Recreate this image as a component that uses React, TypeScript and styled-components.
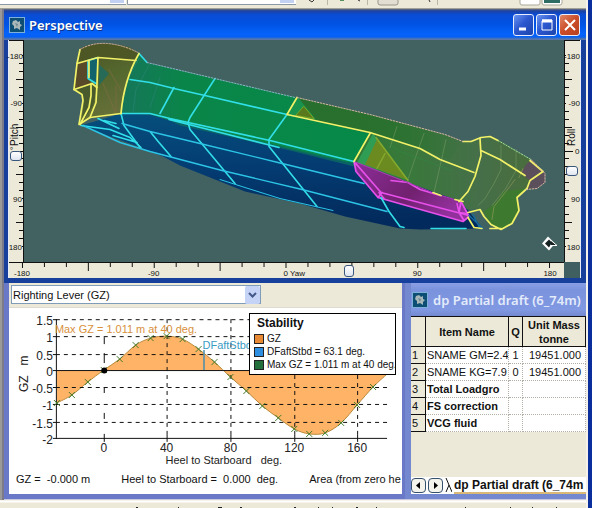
import React from "react";
import styled, { createGlobalStyle } from "styled-components";

const Global = createGlobalStyle`
  * { box-sizing: border-box; }
  body { margin: 0; background: #ece9d8; color: #111; font-family: "Liberation Sans", Arial, sans-serif; font-size: 11px; }
  button, select, input { font: inherit; margin: 0; padding: 0; }
`;

const Shell = styled.div`
  display: flex;
  min-height: 100vh;
  overflow: hidden;
`;
const Workspace = styled.main`
  flex: 1;
  min-width: 0;
  display: flex;
  flex-direction: column;
`;
const OuterEdge = styled.div`
  width: 6px;
  background: #0a2f9c;
  border-left: 2px solid #f4f1ea;
`;
const Strip = styled.div<{ $h: number }>`
  height: ${(p) => p.$h}px;
  background: #ece9d8;
  overflow: hidden;
  svg { display: block; }
`;
const Desk = styled.div`
  flex: 1;
  display: flex;
  flex-direction: column;
  padding-left: 4px;
  background: linear-gradient(90deg, #9c9a98 0 2px, #7a7a88 2px 4px, transparent 4px);
`;
const Win = styled.section`
  flex: 1;
  display: flex;
  flex-direction: column;
  border: solid #173f9c;
  border-width: 0 5px 5px 4px;
  background: #ece9d8;
`;
const TitleBar = styled.header<{ $dim?: boolean }>`
  display: flex;
  align-items: center;
  gap: ${(p) => (p.$dim ? 5 : 4)}px;
  height: ${(p) => (p.$dim ? 33 : 31)}px;
  padding: ${(p) => (p.$dim ? "0 0 0 1px" : "0 6px 0 5px")};
  margin: ${(p) => (p.$dim ? "0" : "0 -5px 0 -4px")};
  color: ${(p) => (p.$dim ? "#e4ebfb" : "#fff")};
  background: ${(p) =>
    p.$dim
      ? "linear-gradient(#8a9fe4, #7b92dd 20%, #8099e2 80%, #7488d0)"
      : "linear-gradient(#676f82 0, #1d42a0 6%, #0a4cd4 18%, #0053e4 50%, #0563fb 80%, #0560f4 90%, #5876a8 97%)"};
  overflow: hidden;
`;
const TitleText = styled.h1<{ $dim?: boolean }>`
  flex: 1;
  margin: 0;
  font: 600 13px/18px "Noto Sans", sans-serif;
  white-space: nowrap;
  overflow: hidden;
  text-shadow: ${(p) => (p.$dim ? "none" : "1px 1px 0 #10328a")};
`;
const Caption = styled.button<{ $close?: boolean }>`
  width: 21px;
  height: 22px;
  border: 1px solid #e8eefc;
  border-radius: 3px;
  background: ${(p) =>
    p.$close
      ? "linear-gradient(135deg, #e08868, #cc4c28 50%, #b84020)"
      : "linear-gradient(135deg, #6a94f0, #2c58d0 45%, #1c44ac)"};
  svg { display: block; margin: auto; }
`;
const Buttons = styled.div`
  display: flex;
  gap: 2px;
`;
const ViewGrid = styled.div`
  flex: 1;
  display: grid;
  grid-template-columns: 15px minmax(0, 1fr) 16px;
  grid-template-rows: minmax(222px, 1fr) 16px;
  border: solid #e8ebf8;
  border-width: 0 1px 0 1px;
`;
const RulerBox = styled.div<{ $side: "left" | "right" | "bottom" }>`
  position: relative;
  background: #ece9d8;
  grid-column: ${(p) => (p.$side === "bottom" ? "1 / 3" : "auto")};
  border: 0 solid #111;
  border-top-width: 1px;
  border-right-width: ${(p) => (p.$side === "left" ? 1 : 0)}px;
  border-left-width: ${(p) => (p.$side === "right" ? 1 : 0)}px;
  svg { position: absolute; inset: 0; width: 100%; height: 100%; overflow: visible; }
  text { font-size: 8px; fill: #111; }
`;
const Viewport = styled.div`
  background: #426262;
  min-width: 0;
  svg { display: block; width: 100%; height: 100%; }
`;
const Corner = styled.div`
  background: #3f5f60;
`;
const Slider = styled.input<{ $vertical?: boolean }>`
  appearance: none;
  position: absolute;
  background: transparent;
  ${(p) =>
    p.$vertical
      ? "writing-mode: vertical-lr; top: 9px; bottom: 9px; left: 0; width: 14px;"
      : "left: 9px; right: 9px; top: 1px; height: 14px;"}
  &::-webkit-slider-thumb {
    appearance: none;
    width: ${(p) => (p.$vertical ? 12 : 10)}px;
    height: ${(p) => (p.$vertical ? 10 : 12)}px;
    border: 1px solid #39577c;
    border-radius: 3px;
    background: linear-gradient(#fff, #dfe5f0);
  }
`;
const AxisName = styled.text`
  && { font-size: 10px; }
`;
const Lower = styled.div`
  display: flex;
  height: 217px;
  border-bottom: 1px solid #c8c8dc;
`;
const GraphWin = styled.section`
  flex: 0 1 401px;
  min-width: 0;
  display: flex;
  flex-direction: column;
  background: #fff;
  border: solid #6a78c8;
  border-width: 0 3px 5px 5px;
`;
const SheetWin = styled.section`
  flex: 1;
  min-width: 0;
  display: flex;
  flex-direction: column;
  background: #ece9d8;
  border: solid #7488d0;
  border-width: 0 0 5px 6px;
`;
const PickerRow = styled.div`
  display: flex;
  flex: none;
  height: 25px;
  padding: 2px 0 3px 2px;
  background: #ece9d8;
  border-bottom: 1px solid #dedbd0;
`;
const Picker = styled.label`
  position: relative;
  flex: 0 1 250px;
  display: flex;
  svg { position: absolute; right: 1px; top: 1px; pointer-events: none; }
`;
const Select = styled.select`
  appearance: none;
  width: 100%;
  padding-left: 1px;
  border: 1px solid #7f9db9;
  border-radius: 0;
  background: #fff;
  color: #111;
`;
const ChartBox = styled.div`
  position: relative;
  flex: 1;
  min-height: 0;
  > svg { display: block; width: 100%; height: 100%; }
  text { font-size: 12px; fill: #222; white-space: pre; }
`;
const Legend = styled.aside`
  position: absolute;
  right: 6px;
  top: 5px;
  width: 147px;
  padding: 1px 0 3px 4px;
  background: #fff;
  border: 1px solid #000;
  white-space: nowrap;
`;
const LegendTitle = styled.h2`
  margin: 0 0 0 3px;
  font-size: 12px;
  line-height: 17px;
`;
const LegendItem = styled.div<{ $c: string }>`
  display: flex;
  align-items: center;
  gap: 3px;
  line-height: 13px;
  font-size: 10px;
  &::before {
    content: "";
    flex: none;
    width: 8px;
    height: 8px;
    border: 1px solid #222;
    background: ${(p) => p.$c};
  }
`;
const Readout = styled.footer`
  display: flex;
  flex: none;
  gap: 31px;
  padding: 0 0 8px 7px;
  line-height: 14px;
  white-space: pre;
  overflow: hidden;
`;
const Table = styled.table`
  width: 100%;
  table-layout: fixed;
  border-collapse: separate;
  border-spacing: 0;
  background: #fff;
  th, td { padding: 0 1px; overflow: hidden; white-space: nowrap; height: 17px; }
`;
const Head = styled.th<{ $w?: number }>`
  width: ${(p) => (p.$w ? p.$w + "px" : "auto")};
  && { height: 31px; white-space: normal; padding: 0; }
  background: #ece9d8;
  border: solid #111;
  border-width: 1px 1px 1px 0;
  line-height: 14px;
`;
const RowHead = styled.th`
  background: #ece9d8;
  border: solid #111;
  border-width: 0 1px 1px 0;
  font-weight: 400;
  text-align: left;
  font-size: 11px;
`;
const Cell = styled.td<{ $bold?: boolean; $align?: string }>`
  font-size: 11px;
  font-weight: ${(p) => (p.$bold ? 700 : 400)};
  text-align: ${(p) => p.$align ?? "left"};
  border: dotted #b4b0a8;
  border-width: 0 1px 1px 0;
`;
const MassCell = styled(Cell)`
  && { padding-right: 4px; }
`;
const TabBar = styled.nav`
  display: flex;
  align-items: center;
  gap: 2px;
  height: 17px;
  margin-top: auto;
  background: #fff;
  overflow: hidden;
`;
const Nudge = styled.button`
  flex: none;
  width: 15px;
  height: 15px;
  border: 1px solid #33506e;
  border-radius: 4px;
  background: #f4f3ec;
  svg { display: block; margin: auto; }
`;
const SheetTab = styled.button`
  flex: 1;
  min-width: 0;
  height: 17px;
  overflow: hidden;
  border: 0;
  border-bottom: 2px solid #d9b878;
  background: #fff;
  color: #111;
  font-weight: 700;
  font-size: 12px;
  line-height: 14px;
  text-align: left;
  white-space: nowrap;
`;

const AppIcon = () => (
  <svg width="16" height="16" viewBox="0 0 16 16" aria-hidden="true">
    <rect x=".5" y=".5" width="15" height="15" fill="#0d4f74" stroke="#7fb0d8" />
    <path d="M4 4l3-1 2 2 2-1 0 3 2 1-2 2 0 3-3-2-3 1 0-3-2-2z" fill="#a8b8b8" />
    <path d="M6 6l3 1-1 3z" fill="#6f8890" />
  </svg>
);

const steps = Array.from({ length: 25 }, (_, i) => i);

function VerticalRuler({ side, name, value }: { side: "left" | "right"; name: string; value: number }) {
  const left = side === "left";
  return (
    <RulerBox $side={side}>
      <svg viewBox={left ? "1 0 14 221" : "0 0 15 221"}>
        {steps.map((i) => {
          const y = Math.round(14 + i * 7.96) + 0.5;
          const len = i === 12 ? (left ? 3 : 8) : i % 6 === 0 ? 1 : i % 3 === 0 ? 7 : 4;
          return <path key={i} d={left ? `M15 ${y}h-${len}` : `M0 ${y}h${len}`} stroke="#111" />;
        })}
        {[-180, -90, 90, 180].map((v) => (
          <text key={v} x={left && v !== -180 ? 14 : 15} y={110 + (v / 180) * 95.5 + 3} textAnchor="end">
            {v}
          </text>
        ))}
        <AxisName transform="translate(10 105) rotate(-90)">{name}</AxisName>
        {left ? <text transform="translate(8 109) rotate(-90)">°</text> : <text x="10" y="113">0</text>}
      </svg>
      <Slider $vertical type="range" min={-180} max={180} defaultValue={value} aria-label={name} />
    </RulerBox>
  );
}

function YawRuler() {
  return (
    <RulerBox $side="bottom">
      <svg viewBox="9 263 556 15">
        {steps.map((i) => {
          const x = Math.round(22 + i * 22) + 0.5;
          return <path key={i} d={`M${x} 263v${i % 6 === 3 ? 8 : i % 6 === 0 ? 5 : 4}`} stroke="#111" />;
        })}
        <text x="22" y="276" textAnchor="middle">-180</text>
        <text x="154" y="276" textAnchor="middle">-90</text>
        <text x="284" y="276">0 Yaw</text>
        <text x="418" y="276" textAnchor="middle">90</text>
        <text x="551" y="276" textAnchor="middle">180</text>
      </svg>
      <Slider type="range" min={-180} max={180} defaultValue={43} aria-label="Yaw" />
    </RulerBox>
  );
}

const Hull = () => (
  <svg viewBox="24 41 540 221" role="img" aria-label="Hull perspective" fill="none" strokeLinejoin="round" strokeLinecap="round">
    <defs>
      <linearGradient id="blue" x1="0" y1="0" x2="0.12" y2="1">
        <stop offset="0" stopColor="#064f7c" />
        <stop offset=".5" stopColor="#043c72" />
        <stop offset="1" stopColor="#032a5c" />
      </linearGradient>
      <linearGradient id="green" x1="0" y1="0" x2="1" y2="0">
        <stop offset="0" stopColor="#16755a" />
        <stop offset=".25" stopColor="#0a8549" />
        <stop offset="1" stopColor="#068a48" />
      </linearGradient>
      <linearGradient id="fore" x1="0" y1="0" x2="1" y2="0">
        <stop offset="0" stopColor="#22752f" />
        <stop offset=".45" stopColor="#38793a" />
        <stop offset=".75" stopColor="#466f49" />
        <stop offset="1" stopColor="#4a6c38" />
      </linearGradient>
      <linearGradient id="deck" x1="0" y1="0" x2="1" y2="0">
        <stop offset="0" stopColor="#286f2e" />
        <stop offset=".6" stopColor="#286f2e" stopOpacity=".8" />
        <stop offset="1" stopColor="#286f2e" stopOpacity="0" />
      </linearGradient>
      <linearGradient id="pink" x1="0" y1="0" x2="1" y2=".5">
        <stop offset="0" stopColor="#8c2d98" />
        <stop offset=".6" stopColor="#71216f" />
        <stop offset="1" stopColor="#92309c" />
      </linearGradient>
      <linearGradient id="stern" x1="0" y1="0" x2=".3" y2="1">
        <stop offset="0" stopColor="#4c4e23" />
        <stop offset=".5" stopColor="#54682e" />
        <stop offset="1" stopColor="#68703a" />
      </linearGradient>
    </defs>

    <path d="M81 126L121 114L150 114L170 118L270 139L355 160L400 180L462 202L472 216L483 229L420 230L400 229L345 217L300 204L245 192L220 182L180 166L163 157L135 146L110 137Z" fill="url(#blue)" />
    <path d="M139 54L147 63L297 98L287 115L370 134L354 164L320 157L270 145L170 121L150 115L121 114L126 80Z" fill="url(#green)" />
    <path d="M170 121L270 144L354 164L354 167L290 151L180 126Z" fill="#0c6c60" opacity=".8" />
    <path d="M297 98L370 115L445 135L463 142L472 142L490 137L500 141L531 160L545 175L544 183L537 189L526 189L517 197L519 212L512 224L501 230L490 226L480 210L467 210L461 202L400 180L355 162L370 134L287 115Z" fill="url(#fore)" />
    <path d="M297 98L370 115L445 135L463 142L450 160L420 149L370 133L290 115Z" fill="url(#deck)" />
    <path d="M526 189L517 197L519 212L512 224L501 230L490 224L484 212Q499 203 503 192Z" fill="#3b7d2b" opacity=".8" />
    <path d="M526 165L532 160L545 174L545 183L537 189L527 189L530 181L521 174Z" fill="#5c4f5c" />
    <path d="M373 134L409 181L357 163Z" fill="#309d55" />
    <path d="M377 140L409 181L365 165Z" fill="#6b8b21" />
    <path d="M385 154L377 169M376 138L408 181" stroke="#85a92c" strokeWidth="1.5" />
    <path d="M298 98L316 120L288 115Z" fill="#17934e" />
    <path d="M304 107L314 119L296 116Z" fill="#59791c" stroke="#78a423" />

    <path d="M80 49Q92 43 107 44T130 48L139 54L133 66L126 83L121 114L90 118L80 126L83 101L82 95L74 90L77 64Z" fill="url(#stern)" />
    <path d="M80 50Q92 44 107 44T138 54L136 61L98 58L77 64Z" fill="#4c5725" />
    <path d="M77 64L88 61V80L92 84L74 90Z" fill="#584929" />
    <path d="M88 60L98 58L97 84L88 80Z" fill="#12636c" />
    <path d="M99 65L109 74L99 86Z" fill="#286a58" />
    <path d="M74 90L92 84L97 88L93 106L81 125L84 105L82 95Z" fill="#495b2c" />
    <path d="M109 70L121 91M103 84L116 114M116 86V112" stroke="#806b43" strokeWidth=".7" />

    <g stroke="#7c9d68" strokeWidth=".7" opacity=".75">
      <path d="M424 134L414 162L408 180M446 140L440 167L434 193M390 148L397 127" />
      <path d="M501 146L501 170L494 184L485 199L478 206M516 150V171L505 190L492 206" />
      <path d="M515 180Q507 191 494 207L492 220M519 178L523 169" stroke="#a8a463" />
      <path d="M389 144L400 152L452 171" stroke="#318a44" />
    </g>
    <path d="M139 59L130 75M150 64L136 90L133 112M160 78L150 108" stroke="#25826d" strokeWidth=".8" />

    <path d="M354 162L400 180L435 194L461 202L469 217L463 222L378 198L356 172Z" fill="url(#pink)" />
    <path d="M354 162L356 172L378 198L463 222L469 217L461 202M354 162L381 193L469 216M378 198L382 193M461 202L459 213L464 221M391 181L408 183L420 190L440 196" stroke="#e850ec" strokeWidth="1.7" />
    <path d="M354 162L400 180L435 194L461 202" stroke="#b03cb8" strokeWidth="1" />
    <path d="M457 204L459 213L467 214M379 193L384 199" stroke="#e850ec" strokeWidth="1.5" />
    <path d="M469 216L483 229M473 215L480 229" stroke="#176a9b" strokeWidth="1.5" />

    <g stroke="#32dfe8" strokeWidth="1.6">
      <path d="M139 54L147 63" />
      <path d="M130 80L150 83L174 89L205 96L287 115" />
      <path d="M174 88L160 114M215 79L190 118L188 123L190 130L235 184M287 115L269 140V147L317 207" />
      <path d="M121 114L150 114L170 119L270 141L354 162M169 120L279 148" />
      <path d="M121 114L124 126L140 148M150 132L159 143L171 157" />
      <path d="M381 198L389 212L400 227L404 228M431 229H466" />
      <path d="M81 126L110 130L130 138L141 148M98 119L119 129M104 121L116 124M113 136L137 143" />
      <path d="M88 79V61L98 58M88 79L96 84" />
    </g>
    <g stroke="#2cc5e6" strokeWidth="1.4">
      <path d="M122 124L150 132L200 144L278 163L364 184" />
      <path d="M83 126L120 143L150 152L222 171L302 190L387 212" />
      <path d="M220 180L245 188L280 199L333 211" strokeWidth="1" />
    </g>
    <g stroke="#f2f268" strokeWidth="1.7">
      <path d="M80 50L77 64L74 90L82 95L83 101L79 125L90 118L121 114" />
      <path d="M139 54Q124 80 121 114M77 64L98 58L136 61M98 58L97 84L96 103L90 118" />
      <path d="M74 90L92 84L97 88M91 84V96L89 108L80 125M89 61V78" />
      <path d="M297 98L287 115L370 133L395 141L420 149L440 160L474 173M370 134L354 162" />
      <path d="M480 139L481 156L475 177L468 192L459 202M481 151L500 160L525 176" />
      <path d="M463 142L471 142L481 138L490 137L498 141M530 161L543 172L530 181L527 189" />
      <path d="M527 189L517 198L519 211L512 224L501 230L491 225L484 217L480 210L468 213M468 218L474 228L482 229M490 229H501" />
      <path d="M433 193L441 196M455 200L463 202" />
    </g>
    <path d="M80 50Q92 43 107 44T138 53M297 98L370 115L445 135L463 142M531 160L545 174L545 183L537 189L526 190" stroke="#d8b5a6" strokeWidth="1" strokeDasharray="1.5 1.5" />
    <path d="M147 63L295 98" stroke="#93afc9" strokeDasharray="1.5 1.5" />
    <path d="M498 141L531 160" stroke="#9cdf9a" strokeDasharray="1.5 1.5" />
    <path d="M548 237L555 244L549 251L542 244Z" fill="#fff" />
    <path d="M549 240L552 243L549 248L545 244Z" fill="#152020" />
    <path d="M551 241L557 246H551" fill="#152020" stroke="#fff" />
  </svg>
);

const gz: [number, number][] = [
  [57, 403], [72, 395], [88, 382], [104, 370], [120, 359], [136, 345], [151, 338], [167, 336], [183, 339], [199, 349],
  [215, 362], [231, 377], [247, 391], [263, 406], [279, 418], [295, 429], [310, 434], [326, 433], [342, 423], [358, 405],
  [374, 387], [388, 374],
];
const curve = gz
  .slice(1)
  .map(([x, y], i) => {
    const a = gz[Math.max(0, i - 1)];
    const b = gz[i];
    const d = gz[Math.min(gz.length - 1, i + 2)];
    return `C${b[0] + (x - a[0]) / 6} ${b[1] + (y - a[1]) / 6} ${x - (d[0] - b[0]) / 6} ${y - (d[1] - b[1]) / 6} ${x} ${y}`;
  })
  .join("");
const yLabels: [string, number][] = [
  ["1.5", 319], ["1", 336], ["0.5", 354], ["0", 370], ["-0.5", 387], ["-1", 404], ["-1.5", 422], ["-2", 438],
];

const Tint = styled.text<{ $c: string }>`
  &&& { fill: ${(p) => p.$c}; font-size: 11px; }
`;

const Chart = () => (
  <svg viewBox="9 308 394 164" role="img" aria-label="Righting lever curve">
    <path d={`M57 370.5V403${curve}V370.5Z`} fill="#ffb366" />
    <path d={`M57 403${curve}`} fill="none" stroke="#b8893a" />
    {yLabels.map(([t, y]) => (
      <g key={t}>
        <path
          d={`M56 ${y + 0.5}H388`}
          stroke="#111"
          strokeDasharray={t === "0" || t === "-2" ? undefined : "4 4"}
        />
        <path d={`M53 ${y + 0.5}h4`} stroke="#111" />
        <text x="53" y={y + 6} textAnchor="end">{t}</text>
      </g>
    ))}
    <path d="M56.5 319V438" stroke="#111" />
    <path d="M167.5 319V438M231.5 319V438M295.5 319V438M358.5 319V438" stroke="#111" strokeDasharray="4 4" />
    <path d="M104.5 337v7M104.5 353v10M104.5 387v6M104.5 413v6M104.5 434v8M167.5 435v7M231.5 435v7M295.5 435v7M358.5 435v7" stroke="#111" />
    {gz.slice(0, -1).map(([x, y]) => (
      <path key={x} d={`M${x - 3} ${y - 3}l6 6m0-6l-6 6`} stroke="#3f7a28" />
    ))}
    <path d="M204.5 350V370" stroke="#4b8eb0" strokeWidth="1.5" />
    <circle cx="104.5" cy="370.5" r="3" fill="#000" />
    <text x="104" y="452" textAnchor="middle">0</text>
    <text x="167" y="452" textAnchor="middle">40</text>
    <text x="231" y="452" textAnchor="middle">80</text>
    <text x="295" y="452" textAnchor="middle">120</text>
    <text x="358" y="452" textAnchor="middle">160</text>
    <Tint x="55" y="333" $c="#d8903c">Max GZ = 1.011 m at 40 deg.</Tint>
    <Tint x="203" y="349" $c="#3b9cc4">DFaftStbd</Tint>
    <Tint x="166" y="464" $c="#222">{"Heel to Starboard   deg."}</Tint>
    <text transform="translate(28 392) rotate(-90)">{"GZ   m"}</text>
  </svg>
);

const rows: [string, string, string, boolean][] = [
  ["SNAME GM=2.4", "1", "19451.000", false],
  ["SNAME KG=7.9", "0", "19451.000", false],
  ["Total Loadgro", "", "", true],
  ["FS correction", "", "", true],
  ["VCG fluid", "", "", true],
];

export default function App() {
  return (
    <Shell>
      <Global />
      <Workspace>
        <Strip $h={9}>
          <svg width="586" height="9" viewBox="0 0 586 9" aria-hidden="true">
            <path d="M0 0H126V4H0ZM128 0H296V4H128Z" fill="#fff" />
            <path d="M0 4.500H126M127.500 0V4.500H296" stroke="#8c98a4" fill="none" />
            <path d="M110 0h14v3h-14zM280 0h14v3h-14z" fill="#c2d0f2" />
            <path d="M309 0l3 2 2-2M358 0l2 1M429 0l1 2" stroke="#333" fill="none" />
            <path d="M340 0h4v1h-4z" fill="#55905c" />
            <path d="M327.500 0V5M367.500 0V5M437.500 0V5" stroke="#bbb7a6" />
            <rect x="378" y="-8" width="20" height="13" rx="2" fill="#e2dfd2" stroke="#98948a" />
            <rect x="520" y="-8" width="20" height="13" rx="2" fill="#fff" stroke="#aaa69a" />
            <rect x="542" y="-8" width="20" height="13" rx="2" fill="#fff" stroke="#aaa69a" />
            <path d="M544 0h16v3h-16z" fill="#2f6d64" />
            <path d="M0 8.500H586" stroke="#a3a197" />
          </svg>
        </Strip>
        <Desk>
          <Win>
            <TitleBar>
              <AppIcon />
              <TitleText>Perspective</TitleText>
              <Buttons>
                <Caption aria-label="Minimize">
                  <svg width="14" height="14"><path d="M2 11h7" stroke="#fff" strokeWidth="3" /></svg>
                </Caption>
                <Caption aria-label="Maximize">
                  <svg width="14" height="14"><path d="M2 3v9h10V2H2" fill="none" stroke="#fff" /><path d="M2 3h10" stroke="#fff" strokeWidth="3" /></svg>
                </Caption>
                <Caption $close aria-label="Close">
                  <svg width="14" height="14"><path d="M2 2l10 10M12 2L2 12" stroke="#fff" strokeWidth="2" /></svg>
                </Caption>
              </Buttons>
            </TitleBar>
            <ViewGrid>
              <VerticalRuler side="left" name="Pitch" value={9} />
              <Viewport><Hull /></Viewport>
              <VerticalRuler side="right" name="Roll" value={37} />
              <YawRuler />
              <Corner />
            </ViewGrid>
          </Win>
          <Lower>
            <GraphWin>
              <PickerRow>
                <Picker>
                  <Select aria-label="Graph type">
                    <option>Righting Lever (GZ)</option>
                  </Select>
                  <svg width="15" height="18" aria-hidden="true">
                    <rect width="15" height="18" rx="2" fill="#c5d3f7" />
                    <path d="M4 7l3.500 3.500L11 7" fill="none" stroke="#42598a" strokeWidth="2" />
                  </svg>
                </Picker>
              </PickerRow>
              <ChartBox>
                <Chart />
                <Legend>
                  <LegendTitle>Stability</LegendTitle>
                  <LegendItem $c="#e88a34">GZ</LegendItem>
                  <LegendItem $c="#2e8ee0">DFaftStbd = 63.1 deg.</LegendItem>
                  <LegendItem $c="#24703c">Max GZ = 1.011 m at 40 deg.</LegendItem>
                </Legend>
              </ChartBox>
              <Readout>
                <span>{"GZ =  -0.000 m"}</span>
                <span>{"Heel to Starboard =  0.000  deg."}</span>
                <span>Area (from zero he</span>
              </Readout>
            </GraphWin>
            <SheetWin>
              <TitleBar $dim>
                <AppIcon />
                <TitleText $dim>dp Partial draft (6_74m)</TitleText>
              </TitleBar>
              <Table>
                <thead>
                  <tr>
                    <Head $w={15} aria-label="Row" />
                    <Head $w={83}>Item Name</Head>
                    <Head $w={14}>Q</Head>
                    <Head>Unit Mass tonne</Head>
                  </tr>
                </thead>
                <tbody>
                  {rows.map(([name, q, mass, bold], i) => (
                    <tr key={name}>
                      <RowHead scope="row">{i + 1}</RowHead>
                      <Cell $bold={bold}>{name}</Cell>
                      <Cell $align="center">{q}</Cell>
                      <MassCell $align="right">{mass}</MassCell>
                    </tr>
                  ))}
                </tbody>
              </Table>
              <TabBar>
                <Nudge aria-label="Previous sheet"><svg width="7" height="7"><path d="M5 0v7L1 3.500z" /></svg></Nudge>
                <Nudge aria-label="Next sheet"><svg width="7" height="7"><path d="M2 0v7l4-3.500z" /></svg></Nudge>
                <svg width="7" height="15"><path d="M1 0l6 14M4 7L1 14" stroke="#111" fill="none" /></svg>
                <SheetTab>dp Partial draft (6_74m</SheetTab>
              </TabBar>
            </SheetWin>
          </Lower>
        </Desk>
        <Strip $h={8}>
          <svg width="586" height="8" viewBox="0 0 586 8" aria-hidden="true">
            <path d="M0 1.500H586" stroke="#fff" strokeWidth="2" />
            <path d="M136 7.500h2M178 7.500h1M218 7.500h4M240 7.500h2M294 7.500h2M318 7.500h1M332 7.500h1M356 7.500h2M376 7.500h1M465 7.500h1M510 7.500h1M532 7.500h1M556 7.500h1" stroke="#222" />
          </svg>
        </Strip>
      </Workspace>
      <OuterEdge />
    </Shell>
  );
}
